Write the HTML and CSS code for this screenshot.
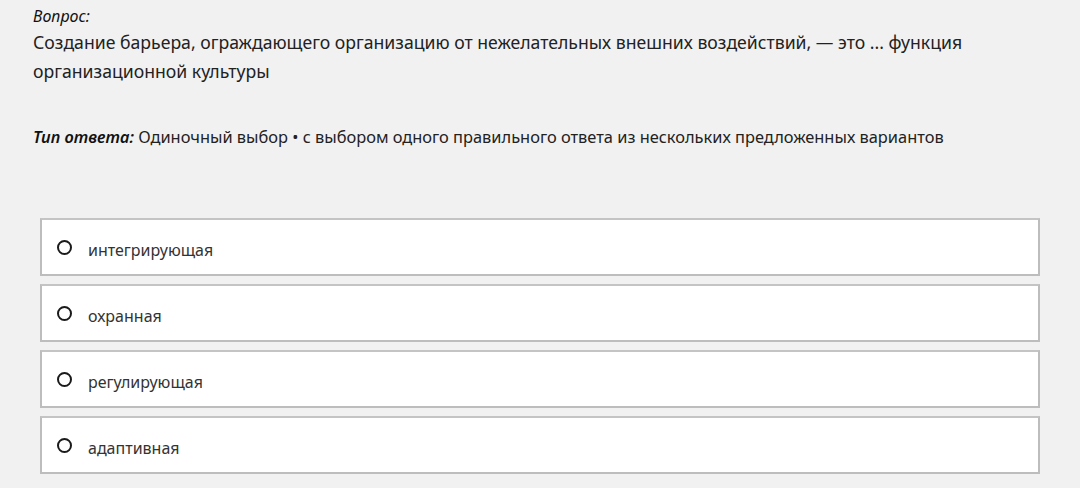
FILE: index.html
```html
<html><head>
<meta charset="utf-8"><link rel="stylesheet" href="styles.css">
</head><body><div class="quiz">
	<div class="q_label">Вопрос:</div>
	<div class="q_text">Создание барьера, ограждающего организацию от нежелательных внешних воздействий, — это ... функция организационной культуры</div>
	<div class="q_type"><em>Тип ответа:</em> Одиночный выбор • с выбором одного правильного ответа из нескольких предложенных вариантов</div>

	<div class="options">
		<label class="option"><span class="radio"></span><span class="otext">интегрирующая</span></label>
		<label class="option"><span class="radio"></span><span class="otext">охранная</span></label>
		<label class="option"><span class="radio"></span><span class="otext">регулирующая</span></label>
		<label class="option"><span class="radio"></span><span class="otext">адаптивная</span></label>
	</div>
</div></body></html>
```

FILE: styles.css
```css
html, body {margin: 0;padding: 0;}
body {background: #f1f1f1;font-family: "Noto Sans", "Open Sans", sans-serif;color: #222;}
.quiz {padding: 4px 40px 0 33px;}
.q_label {font-style: italic;font-size: 16px;line-height: 24px;color: #111;}
.q_text {font-size: 17.65px;line-height: 29px;color: #222;width: 960px;}
.q_type {font-size: 16.4px;line-height: 24px;margin-top: 39px;color: #222;}
.q_type em {font-weight: 600;color: #111;}
.options {margin: 69px 0 0 7px;display: flex;flex-direction: column;gap: 8px;}
.option {display: flex;align-items: center;height: 54px;background: #fff;border: 2px solid #bdbdbd;border-top-color: #c4c4c4;cursor: pointer;}
.radio {width: 11px;height: 11px;border: 2px solid #1a1a1a;border-radius: 50%;margin: 0 16px 0 15px;}
.otext {font-size: 16px;color: #333;padding-top: 5px;}
```
